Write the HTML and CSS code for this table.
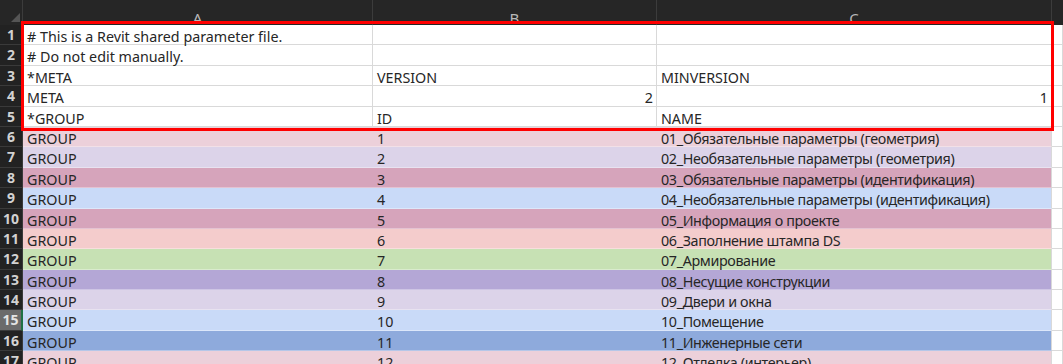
FILE: index.html
```html
<!DOCTYPE html>
<html>
<head>
<meta charset="utf-8">
<link rel="stylesheet" href="styles.css">
</head>
<body>
<div class="sheet">
  <div class="hdr corner"><span class="tri"></span></div>
  <div class="hdr col">A</div>
  <div class="hdr col">B</div>
  <div class="hdr col">C</div>
  <div class="hdr col end"></div>

  <div class="rn">1</div><div class="c">#&nbsp;This is a Revit shared parameter file.</div><div class="c"></div><div class="c"></div><div class="c x"></div>
  <div class="rn">2</div><div class="c">#&nbsp;Do not edit manually.</div><div class="c"></div><div class="c"></div><div class="c x"></div>
  <div class="rn">3</div><div class="c">*META</div><div class="c">VERSION</div><div class="c">MINVERSION</div><div class="c x"></div>
  <div class="rn">4</div><div class="c">META</div><div class="c num">2</div><div class="c num">1</div><div class="c x"></div>
  <div class="rn">5</div><div class="c">*GROUP</div><div class="c">ID</div><div class="c">NAME</div><div class="c x"></div>

  <div class="rn">6</div><div class="c f f6">GROUP</div><div class="c f f6">1</div><div class="c f f6 l">01_Обязательные параметры (геометрия)</div><div class="c x"></div>
  <div class="rn">7</div><div class="c f f7">GROUP</div><div class="c f f7">2</div><div class="c f f7 l">02_Необязательные параметры (геометрия)</div><div class="c x"></div>
  <div class="rn">8</div><div class="c f f8">GROUP</div><div class="c f f8">3</div><div class="c f f8 l">03_Обязательные параметры (идентификация)</div><div class="c x"></div>
  <div class="rn">9</div><div class="c f f9">GROUP</div><div class="c f f9">4</div><div class="c f f9 l">04_Необязательные параметры (идентификация)</div><div class="c x"></div>
  <div class="rn">10</div><div class="c f f8">GROUP</div><div class="c f f8">5</div><div class="c f f8 l">05_Информация о проекте</div><div class="c x"></div>
  <div class="rn">11</div><div class="c f f11">GROUP</div><div class="c f f11">6</div><div class="c f f11 l">06_Заполнение штампа DS</div><div class="c x"></div>
  <div class="rn">12</div><div class="c f f12">GROUP</div><div class="c f f12">7</div><div class="c f f12 l">07_Армирование</div><div class="c x"></div>
  <div class="rn">13</div><div class="c f f13">GROUP</div><div class="c f f13">8</div><div class="c f f13 l">08_Несущие конструкции</div><div class="c x"></div>
  <div class="rn">14</div><div class="c f f7">GROUP</div><div class="c f f7">9</div><div class="c f f7 l">09_Двери и окна</div><div class="c x"></div>
  <div class="rn sel">15</div><div class="c f f9">GROUP</div><div class="c f f9">10</div><div class="c f f9 l">10_Помещение</div><div class="c x"></div>
  <div class="rn">16</div><div class="c f f16">GROUP</div><div class="c f f16">11</div><div class="c f f16 l">11_Инженерные сети</div><div class="c x"></div>
  <div class="rn">17</div><div class="c f f6">GROUP</div><div class="c f f6">12</div><div class="c f f6 l">12_Отделка (интерьер)</div><div class="c x"></div>

  <div class="mark"></div>
</div>
</body>
</html>
```

FILE: styles.css
```css
html, body {
  margin: 0;
  padding: 0;
  background: #ffffff;
  overflow: hidden;
}

.sheet {
  position: relative;
  display: grid;
  grid-template-columns: 23px 350px 284px 395px 11px;
  grid-template-rows: 25px repeat(17, 20.4px);
  width: 1063px;
  height: 364px;
  overflow: hidden;
  font-family: "Noto Sans", "Open Sans", sans-serif;
  font-size: 14.3px;
  color: #262626;
}

.hdr {
  background: #262626;
  color: #b8b8b8;
  border-right: 1px solid #3c3c3c;
  box-sizing: border-box;
  text-align: center;
  font-size: 15px;
  line-height: 1;
  padding-top: 11px;
}

.corner {
  position: relative;
  background: #262626;
}

.tri {
  position: absolute;
  right: 2px;
  bottom: 3px;
  width: 0;
  height: 0;
  border-left: 9px solid transparent;
  border-bottom: 9px solid #555555;
}

.hdr.end {
  border-right: none;
}

.rn {
  background: #222222;
  color: #d2d2d2;
  font-weight: bold;
  font-size: 14px;
  text-align: center;
  box-sizing: border-box;
  border-bottom: 1px solid #3a3a3a;
  border-right: 1px solid #3a3a3a;
  line-height: 20px;
  padding-top: 0;
}

.rn.sel {
  background: #6b6b6b;
  color: #e4e4e4;
  border-right: 2px solid #1e7145;
}

.c {
  box-sizing: border-box;
  border-right: 1px solid #d9d9d9;
  border-bottom: 1px solid #d9d9d9;
  padding: 2px 3px 0 4px;
  line-height: 19px;
  white-space: nowrap;
  overflow: visible;
}

.num {
  text-align: right;
}

.f {
  border-right: none;
  border-bottom: 1px solid rgba(255, 255, 255, 0.35);
}

.f.l {
  border-right: 1px solid #d9d9d9;
  letter-spacing: -0.35px;
}

.f6 { background: #ecd0da; }
.f7 { background: #dcd3e9; }
.f8 { background: #d6a4bb; }
.f9 { background: #c9daf8; }
.f11 { background: #f4cccc; }
.f12 { background: #c7e1b4; }
.f13 { background: #b4a7d6; }
.f16 { background: #8eaadc; }

.mark {
  position: absolute;
  left: 21px;
  top: 21px;
  width: 1033px;
  height: 110px;
  box-sizing: border-box;
  border: 3px solid #ff0000;
  pointer-events: none;
}
```
